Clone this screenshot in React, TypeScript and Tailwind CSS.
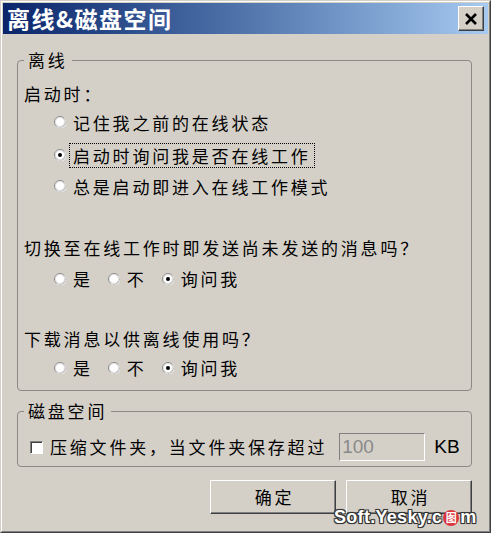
const cjk = "font-['Noto_Sans_CJK_SC','Noto_Sans',sans-serif]";

const Radio = ({ checked }: { checked?: boolean }) => (
  <svg width="12" height="12" viewBox="0 0 12 12" className="shrink-0">
    <circle cx="6" cy="6" r="5.5" fill="#ffffff" stroke="#8a8a8a" />
    <path d="M10.4 2.6 A5.5 5.5 0 0 1 2.6 10.4" fill="none" stroke="#f4f4f4" strokeWidth="1" />
    <circle cx="6" cy="6" r="4.5" fill="none" stroke="#d8d8d8" strokeWidth="0.8" />
    {checked && <circle cx="6" cy="6" r="2" fill="#000" />}
  </svg>
);

const OptionRow = ({ label, checked, focused }: { label: string; checked?: boolean; focused?: boolean }) => (
  <div className="flex items-center h-[26px] pl-[30px]">
    <Radio checked={checked} />
    <span
      className={`ml-[3px] px-[3px] py-[1px] border leading-[21px] ${
        focused ? "border-dotted border-black" : "border-transparent"
      }`}
    >
      {label}
    </span>
  </div>
);

const InlineRadios = () => (
  <div className="flex items-center h-[20px] pl-[30px]">
    <Radio />
    <span className="ml-[7px] mr-[15px]">是</span>
    <Radio />
    <span className="ml-[7px] mr-[15px]">不</span>
    <Radio checked />
    <span className="ml-[7px]">询问我</span>
  </div>
);

const Btn = ({ children }: { children: string }) => (
  <button className="w-[126px] h-[34px] bg-[#d4d0c8] border border-t-white border-l-white border-r-[#404040] border-b-[#404040] shadow-[inset_-1px_-1px_0_#808080] text-[17px] tracking-[2.8px] pl-[3px] text-black">
    {children}
  </button>
);

export default function App() {
  return (
    <div className={`relative w-[491px] h-[533px] bg-[#d4d0c8] border border-t-[#d4d0c8] border-l-[#d4d0c8] border-r-[#404040] border-b-[#404040] ${cjk}`}>
      <div className="h-full border border-t-white border-l-white border-r-[#808080] border-b-[#808080] p-px flex flex-col">
        {/* title bar */}
        <div className="h-[31px] flex items-center justify-between bg-linear-to-r from-[#0a246a] to-[#a6caf0] pl-[4px] pr-[4px]">
          <span className="text-white font-bold text-[23px] tracking-[1.5px] leading-none">离线&amp;磁盘空间</span>
          <button className="w-[26px] h-[25px] bg-[#d4d0c8] border border-t-white border-l-white border-r-[#404040] border-b-[#404040] shadow-[inset_-1px_-1px_0_#808080] flex items-center justify-center">
            <svg width="14" height="12" viewBox="0 0 14 12">
              <path d="M2 1 L12 11 M12 1 L2 11" stroke="#000" strokeWidth="2.6" />
            </svg>
          </button>
        </div>

        <div className="flex flex-col pl-[14px] pr-[16px] text-[17px] tracking-[2.8px] text-black">
          {/* offline group */}
          <fieldset className="mt-[16px] border border-[#8c8a84] rounded-[4px] pl-[6px] pr-[10px] pb-[12px] pt-[14px] min-w-0">
            <legend className="px-[4px] leading-[20px]">离线</legend>
            <div className="h-[20px] leading-[20px]">启动时：</div>
            <div className="mt-[5px]">
              <OptionRow label="记住我之前的在线状态" />
              <div className="mt-[7px]">
                <OptionRow label="启动时询问我是否在线工作" checked focused />
              </div>
              <div className="mt-[5px]">
                <OptionRow label="总是启动即进入在线工作模式" />
              </div>
            </div>
            <div className="mt-[39px] h-[20px] leading-[20px]">切换至在线工作时即发送尚未发送的消息吗？</div>
            <div className="mt-[11px]">
              <InlineRadios />
            </div>
            <div className="mt-[40px] h-[20px] leading-[20px]">下载消息以供离线使用吗？</div>
            <div className="mt-[9px]">
              <InlineRadios />
            </div>
          </fieldset>

          {/* disk group */}
          <fieldset className="mt-[10px] border border-[#8c8a84] rounded-[4px] pl-[6px] pr-[10px] pb-[5px] pt-[12px] min-w-0">
            <legend className="px-[4px] leading-[20px]">磁盘空间</legend>
            <div className="flex items-center h-[28px]">
              <span className="ml-[6px] w-[13px] h-[13px] bg-white border border-t-[#808080] border-l-[#808080] border-r-white border-b-white shadow-[inset_1px_1px_0_#404040]" />
              <span className="ml-[7px]">压缩文件夹，当文件夹保存超过</span>
              <div className="ml-[12px] w-[86px] h-[28px] bg-[#d4d0c8] border border-t-[#808080] border-l-[#808080] border-r-white border-b-white flex items-center pl-[2px] text-[#8a8a8a] text-[19px] tracking-normal font-['Liberation_Sans',sans-serif]">
                100
              </div>
              <span className="ml-[9px] text-[19px] tracking-normal font-['Liberation_Sans',sans-serif]">KB</span>
            </div>
          </fieldset>

          <div className="mt-[13px] flex justify-end gap-[10px]">
            <Btn>确定</Btn>
            <Btn>取消</Btn>
          </div>
        </div>
      </div>

      {/* watermark */}
      <div className="absolute left-[333px] top-[503px] flex items-center font-['Liberation_Sans',sans-serif] font-bold text-[18px] tracking-[0.3px] text-white [text-shadow:1px_1px_0_#333,-1px_-1px_0_#333,1px_-1px_0_#333,-1px_1px_0_#333,0_0_2px_#000]">
        <span>Soft.Yesky.c</span>
        <span className={`mx-px w-[16px] h-[16px] rounded-full bg-[#d9363e] flex items-center justify-center text-[11px] ${cjk} [text-shadow:none]`}>图</span>
        <span>m</span>
      </div>
    </div>
  );
}
